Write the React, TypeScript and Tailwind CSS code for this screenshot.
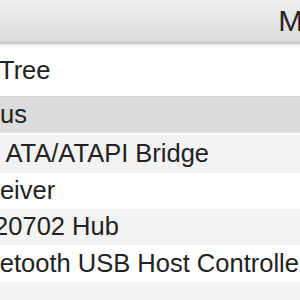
import React from 'react'

const rows = [
  { text: 'Bus', shift: 'ml-[-17px]', bg: 'bg-[#dcdcdc]', h: 'h-[36px]' },
  { text: 'USB to ATA/ATAPI Bridge', shift: 'ml-[-81px]', bg: 'bg-[#f3f3f3]', h: 'h-[38px]' },
  { text: 'IR Receiver', shift: 'ml-[-78px]', bg: 'bg-white', h: 'h-[36px]' },
  { text: 'BRCM20702 Hub', shift: 'ml-[-81px]', bg: 'bg-[#f3f3f3]', h: 'h-[36px]' },
  { text: 'Bluetooth USB Host Controller', shift: 'ml-[-37px]', bg: 'bg-white', h: 'h-[37px]' },
]

export default function App() {
  return (
    <div className="w-[300px] h-[300px] overflow-hidden bg-[#f3f3f3] text-[#222] font-['Liberation_Sans',Arial,sans-serif] text-[25.5px] leading-none">
      <div className="h-[42px] bg-gradient-to-b from-[#efefef] to-[#dbdbdb] flex items-center justify-end overflow-hidden whitespace-nowrap">
        <span className="text-[30px] text-[#2a2222] mr-[-60px]">Model</span>
      </div>
      <div className="h-[2px] bg-[#c8c8c8]" />
      <div className="h-[52px] bg-white border-t-2 border-[#f0f0f0] flex items-center whitespace-nowrap">
        <span className="ml-[-1px]">Tree</span>
      </div>
      <div className="h-[1px] bg-[#d2d2d2]" />
      {rows.map((r, i) => (
        <div key={i}>
          <div className={`${r.h} ${r.bg} flex items-center whitespace-nowrap overflow-hidden`}>
            <span className={`${r.shift} shrink-0`}>{r.text}</span>
          </div>
          {i === 0 && <div className="h-[2px] bg-white" />}
        </div>
      ))}
    </div>
  )
}
